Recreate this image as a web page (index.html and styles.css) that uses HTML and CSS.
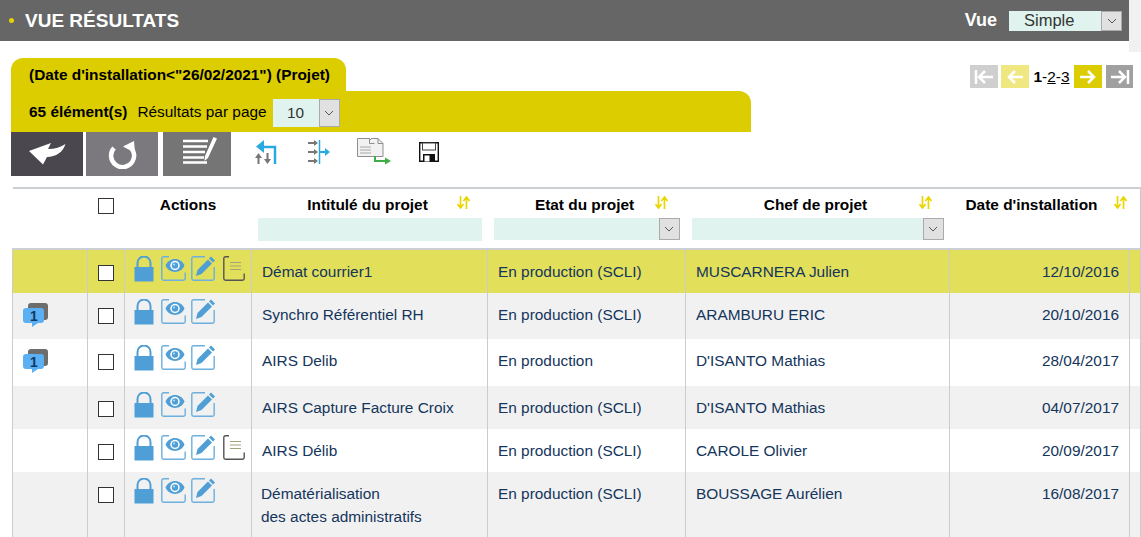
FILE: index.html
```html
<!DOCTYPE html>
<html lang="fr">
<head>
    <meta charset="UTF-8">
    <meta name="viewport" content="width=device-width, initial-scale=1.0">
    <title>Vue résultats</title>
    <link rel="stylesheet" href="styles.css">
</head>
<body>
    <svg class="icon-defs" aria-hidden="true">
        <defs>
            <symbol id="i-lock" viewBox="0 0 20 26">
                <path d="M3.500 12V7a6.500 6.500 0 0 1 13 0V12" fill="none" stroke="#4f9fd6" stroke-width="2"/>
                <rect x="0.500" y="11" width="19" height="14.500" fill="#4f9fd6"/>
            </symbol>
            <symbol id="i-eye" viewBox="0 0 25 25">
                <path d="M8 .8H2.500a1.700 1.700 0 0 0-1.700 1.700v20a1.700 1.700 0 0 0 1.700 1.700h20a1.700 1.700 0 0 0 1.700-1.700v-6" fill="none" stroke="#6db0dd" stroke-width="1.400"/>
                <path d="M4.500 9.500C8 .8 20 .8 23.500 9.500C20 18 8 18 4.500 9.500Z" fill="#4f9fd6"/>
                <circle cx="14" cy="9.500" r="4.700" fill="#fff"/>
                <circle cx="14" cy="9.500" r="3.200" fill="#4f9fd6"/>
                <circle cx="13" cy="8.500" r="1" fill="#bfe0f5"/>
            </symbol>
            <symbol id="i-edit" viewBox="0 0 25 25">
                <path d="M14 .8H2.500a1.700 1.700 0 0 0-1.700 1.700v20a1.700 1.700 0 0 0 1.700 1.700h19a1.700 1.700 0 0 0 1.700-1.700V11" fill="none" stroke="#6db0dd" stroke-width="1.400"/>
                <path d="M5 20l1.500-6L17 3.500l4 4L10.500 18Z" fill="#4f9fd6"/>
                <path d="M18 2.500L20 .6l4 4-2 2Z" fill="#4f9fd6"/>
            </symbol>
            <symbol id="i-note" viewBox="0 0 22 25">
                <path d="M6 .8H2.500a1.700 1.700 0 0 0-1.700 1.700v20a1.700 1.700 0 0 0 1.700 1.700h17a1.700 1.700 0 0 0 1.700-1.700v-5" fill="none" stroke="#555" stroke-width="1.400"/>
                <path d="M7 6.500h11M7 10h11M7 13.500h11" stroke="#a3a27c" stroke-width="1"/>
            </symbol>
            <symbol id="i-comment" viewBox="0 0 25 24">
                <rect x="5" y="0" width="20" height="17" rx="3" fill="#6d6d6d"/>
                <path d="M3 5h15a3 3 0 0 1 3 3v9a3 3 0 0 1-3 3h-3l-6 4v-4H3a3 3 0 0 1-3-3V8a3 3 0 0 1 3-3Z" fill="#5ab0f2"/>
            </symbol>
            <symbol id="i-sort" viewBox="0 0 13 13">
                <path d="M3.500 0v11M.5 8l3 4 3-4M9.500 13V2M6.500 5l3-4 3 4" fill="none" stroke="#ead600" stroke-width="1.700"/>
            </symbol>
        </defs>
    </svg>

    <header class="top-bar">
        <h1 class="top-title"><span class="top-bullet"></span>VUE RÉSULTATS</h1>
        <div class="view-picker">
            <span class="view-label">Vue</span>
            <div class="fake-select view-select">
                <span class="fake-value">Simple</span>
                <span class="fake-arrow"><svg width="10" height="6" viewBox="0 0 10 6"><path d="M1 1l4 4 4-4" fill="none" stroke="#555"/></svg></span>
            </div>
        </div>
    </header>
    <div class="scroll-stub"></div>

    <section class="summary">
        <div class="summary-left">
            <div class="query-tab">(Date d'installation&lt;"26/02/2021") (Projet)</div>
            <div class="count-bar">
                <strong>65 élément(s)</strong>
                <span class="per-page">Résultats par page</span>
                <div class="fake-select page-select">
                    <span class="fake-value">10</span>
                    <span class="fake-arrow"><svg width="10" height="6" viewBox="0 0 10 6"><path d="M1 1l4 4 4-4" fill="none" stroke="#555"/></svg></span>
                </div>
            </div>
        </div>
        <nav class="pager">
            <span class="page-btn btn-first"><svg width="20" height="16" viewBox="0 0 20 16"><path d="M2 1v14M19 8H6M11 2L5 8l6 6" fill="none" stroke="#fff" stroke-width="2.500"/></svg></span>
            <span class="page-btn btn-prev"><svg width="18" height="16" viewBox="0 0 18 16"><path d="M17 8H3M9 2L3 8l6 6" fill="none" stroke="#fff" stroke-width="2.500"/></svg></span>
            <span class="page-nums"><b>1</b>-<a href="#">2</a>-<a href="#">3</a></span>
            <span class="page-btn btn-next"><svg width="18" height="16" viewBox="0 0 18 16"><path d="M1 8h14M9 2l6 6-6 6" fill="none" stroke="#fff" stroke-width="2.500"/></svg></span>
            <span class="page-btn btn-last"><svg width="20" height="16" viewBox="0 0 20 16"><path d="M18 1v14M1 8h13M9 2l6 6-6 6" fill="none" stroke="#fff" stroke-width="2.500"/></svg></span>
        </nav>
    </section>

    <div class="toolbar">
        <button class="tool-btn tool-back"><svg width="37" height="22" viewBox="0 0 37 22"><path d="M0 8L22 0L19 6C26 6 32 4 36.500 1C34 9 27 14 18 14L14 21.500Z" fill="#fff"/></svg></button>
        <button class="tool-btn tool-reset"><svg width="30" height="30" viewBox="0 0 30 30"><path d="M7 9a11.500 11.500 0 1 0 14-2.500" fill="none" stroke="#fff" stroke-width="4.500"/><path d="M27 2L28 14L16 7.500Z" fill="#fff"/></svg></button>
        <button class="tool-btn tool-list"><svg width="34" height="27" viewBox="0 0 34 27"><path d="M0 4h25M0 9.500h24M0 15h22M0 20.500h21M0 25.500h24" stroke="#fff" stroke-width="2.500" fill="none"/><path d="M34 1.500L25 21l-3.500 3 .5-5L30.500 0Z" fill="#fff"/></svg></button>
        <div class="tool-icons">
            <span class="tool-icon icon-a"><svg width="22" height="24" viewBox="0 0 22 24"><path d="M20 24V7H6" fill="none" stroke="#29abe2" stroke-width="2.500"/><path d="M9 0L1 6.500L9 13Z" fill="#29abe2"/><path d="M3.500 24V15M12.500 13v9" fill="none" stroke="#777" stroke-width="2"/><path d="M0 18l3.500-5 3.500 5ZM9 19l3.500 5 3.500-5Z" fill="#777"/></svg></span>
            <span class="tool-icon icon-b"><svg width="22" height="24" viewBox="0 0 22 24"><path d="M0 3h7M0 12h7M0 21h7" fill="none" stroke="#777" stroke-width="2"/><path d="M6 0l4 3-4 3ZM6 9l4 3-4 3ZM6 18l4 3-4 3Z" fill="#777"/><path d="M11.500 0v24" stroke="#29abe2" stroke-width="1.500"/><path d="M11.500 12h6" stroke="#29abe2" stroke-width="2"/><path d="M17 8l5 4-5 4Z" fill="#29abe2"/></svg></span>
            <span class="tool-icon icon-c"><svg width="34" height="27" viewBox="0 0 34 27"><path d="M.5 .5h12l5 5v13H.5Z" fill="#f2f2f2" stroke="#8e8e8e"/><path d="M14 .5h7l5 5v13H14" fill="#f2f2f2" stroke="#8e8e8e"/><path d="M12.500 .5v5h5M21 .5v5h5" fill="none" stroke="#8e8e8e"/><path d="M3 9h11M3 12h11M3 15h11" stroke="#a8a8a8"/><path d="M18 18v5h12" fill="none" stroke="#3fae49" stroke-width="2"/><path d="M28 19.500l6 3.500-6 3.500Z" fill="#3fae49"/></svg></span>
            <span class="tool-icon icon-d"><svg width="20" height="20" viewBox="0 0 20 20"><path d="M.7 .7h18.600v18.600H.7Z" fill="#fff" stroke="#111" stroke-width="1.400"/><rect x="3.500" y="1" width="13" height="7" fill="#fff" stroke="#444"/><rect x="4" y="12" width="12" height="8" fill="#111"/><rect x="5.500" y="13.500" width="5" height="6" fill="#fff"/></svg></span>
        </div>
    </div>

    <table class="results">
        <colgroup>
            <col class="col-flag"><col class="col-check"><col class="col-actions"><col class="col-title"><col class="col-state"><col class="col-chief"><col class="col-date"><col class="col-end">
        </colgroup>
        <thead>
            <tr>
                <th></th>
                <th class="cell-check"><span class="check"></span></th>
                <th class="head-actions">Actions</th>
                <th>
                    <div class="head-line">Intitulé du projet<svg class="sort"><use href="#i-sort"/></svg></div>
                    <div class="filter-input"></div>
                </th>
                <th>
                    <div class="head-line">Etat du projet<svg class="sort"><use href="#i-sort"/></svg></div>
                    <div class="fake-select filter-select"><span class="fake-value"></span><span class="fake-arrow"><svg width="10" height="6" viewBox="0 0 10 6"><path d="M1 1l4 4 4-4" fill="none" stroke="#555"/></svg></span></div>
                </th>
                <th>
                    <div class="head-line">Chef de projet<svg class="sort"><use href="#i-sort"/></svg></div>
                    <div class="fake-select filter-select"><span class="fake-value"></span><span class="fake-arrow"><svg width="10" height="6" viewBox="0 0 10 6"><path d="M1 1l4 4 4-4" fill="none" stroke="#555"/></svg></span></div>
                </th>
                <th class="head-date">
                    <div class="head-line">Date d'installation<svg class="sort"><use href="#i-sort"/></svg></div>
                </th>
                <th class="cell-end"></th>
            </tr>
        </thead>
        <tbody>
            <tr class="row-a row-selected">
                <td></td>
                <td class="cell-check"><span class="check"></span></td>
                <td class="cell-actions"><svg class="a-lock"><use href="#i-lock"/></svg><svg class="a-icon"><use href="#i-eye"/></svg><svg class="a-icon"><use href="#i-edit"/></svg><svg class="a-note"><use href="#i-note"/></svg></td>
                <td>Démat courrier1</td>
                <td>En production (SCLI)</td>
                <td>MUSCARNERA Julien</td>
                <td class="cell-date">12/10/2016</td>
                <td class="cell-end"></td>
            </tr>
            <tr class="row-b row-grey">
                <td class="cell-flag"><span class="comment"><svg><use href="#i-comment"/></svg><b>1</b></span></td>
                <td class="cell-check"><span class="check"></span></td>
                <td class="cell-actions"><svg class="a-lock"><use href="#i-lock"/></svg><svg class="a-icon"><use href="#i-eye"/></svg><svg class="a-icon"><use href="#i-edit"/></svg></td>
                <td>Synchro Référentiel RH</td>
                <td>En production (SCLI)</td>
                <td>ARAMBURU ERIC</td>
                <td class="cell-date">20/10/2016</td>
                <td class="cell-end"></td>
            </tr>
            <tr class="row-c">
                <td class="cell-flag"><span class="comment"><svg><use href="#i-comment"/></svg><b>1</b></span></td>
                <td class="cell-check"><span class="check"></span></td>
                <td class="cell-actions"><svg class="a-lock"><use href="#i-lock"/></svg><svg class="a-icon"><use href="#i-eye"/></svg><svg class="a-icon"><use href="#i-edit"/></svg></td>
                <td>AIRS Delib</td>
                <td>En production</td>
                <td>D'ISANTO Mathias</td>
                <td class="cell-date">28/04/2017</td>
                <td class="cell-end"></td>
            </tr>
            <tr class="row-d row-grey">
                <td></td>
                <td class="cell-check"><span class="check"></span></td>
                <td class="cell-actions"><svg class="a-lock"><use href="#i-lock"/></svg><svg class="a-icon"><use href="#i-eye"/></svg><svg class="a-icon"><use href="#i-edit"/></svg></td>
                <td>AIRS Capture Facture Croix</td>
                <td>En production (SCLI)</td>
                <td>D'ISANTO Mathias</td>
                <td class="cell-date">04/07/2017</td>
                <td class="cell-end"></td>
            </tr>
            <tr class="row-e">
                <td></td>
                <td class="cell-check"><span class="check"></span></td>
                <td class="cell-actions"><svg class="a-lock"><use href="#i-lock"/></svg><svg class="a-icon"><use href="#i-eye"/></svg><svg class="a-icon"><use href="#i-edit"/></svg><svg class="a-note"><use href="#i-note"/></svg></td>
                <td>AIRS Délib</td>
                <td>En production (SCLI)</td>
                <td>CAROLE Olivier</td>
                <td class="cell-date">20/09/2017</td>
                <td class="cell-end"></td>
            </tr>
            <tr class="row-f row-grey">
                <td></td>
                <td class="cell-check"><span class="check"></span></td>
                <td class="cell-actions"><svg class="a-lock"><use href="#i-lock"/></svg><svg class="a-icon"><use href="#i-eye"/></svg><svg class="a-icon"><use href="#i-edit"/></svg></td>
                <td class="cell-two-lines">Dématérialisation<br>des actes administratifs</td>
                <td>En production (SCLI)</td>
                <td>BOUSSAGE Aurélien</td>
                <td class="cell-date">16/08/2017</td>
                <td class="cell-end"></td>
            </tr>
        </tbody>
    </table>
</body>
</html>
```

FILE: styles.css
```css
html, body {
    height: 537px;
    overflow: hidden;
}
body {
    margin: 0;
    font-family: "Liberation Sans", Arial, sans-serif;
    font-size: 15.4px;
    color: #000;
    background-color: #fff;
    position: relative;
}
.icon-defs {
    position: absolute;
    width: 0;
    height: 0;
}

/* top bar */
.top-bar {
    display: flex;
    justify-content: space-between;
    align-items: center;
    height: 41px;
    width: 1129px;
    background-color: #666;
    box-sizing: border-box;
    padding: 0 7px 0 9px;
}
.top-title {
    display: flex;
    align-items: center;
    margin: 0;
    font-size: 19px;
    font-weight: bold;
    color: #fff;
}
.top-bullet {
    width: 5px;
    height: 5px;
    margin-right: 11px;
    border-radius: 50%;
    background-color: #e6d200;
}
.view-picker {
    display: flex;
    align-items: center;
    gap: 12px;
}
.view-label {
    font-size: 18px;
    font-weight: bold;
    color: #fff;
}
.scroll-stub {
    position: absolute;
    top: 0;
    right: 0;
    width: 12px;
    height: 52px;
    background-color: #f1f1f1;
}

/* selects */
.fake-select {
    display: flex;
    background-color: #e0f3ee;
    box-sizing: border-box;
}
.fake-value {
    flex: 1;
    text-align: center;
    color: #333;
}
.fake-arrow {
    display: flex;
    align-items: center;
    justify-content: center;
    width: 21px;
    background-color: #e1e1e1;
    border: 1px solid #aaa;
    box-sizing: border-box;
}
.view-select {
    width: 113px;
    height: 20px;
    font-size: 16.5px;
    line-height: 18px;
}
.view-select .fake-value {
    text-align: left;
    padding-left: 15px;
}
.page-select {
    width: 67px;
    height: 28px;
    line-height: 28px;
    margin: 3px 0 0 6px;
}

/* query summary */
.summary {
    display: flex;
    justify-content: space-between;
    align-items: flex-start;
    padding: 17px 8px 0 11px;
}
.query-tab {
    width: 335px;
    height: 33px;
    box-sizing: border-box;
    padding: 8px 0 0 18px;
    background-color: #dccd00;
    border-radius: 12px 12px 0 0;
    font-weight: bold;
}
.count-bar {
    display: flex;
    align-items: center;
    width: 740px;
    height: 41px;
    box-sizing: border-box;
    padding: 0 0 0 18px;
    background-color: #dccd00;
    border-radius: 0 12px 0 0;
}
.per-page {
    margin-left: 10px;
}
.pager {
    display: flex;
    align-items: center;
    gap: 3px;
    margin-top: 7px;
}
.page-btn {
    display: flex;
    align-items: center;
    justify-content: center;
    width: 28px;
    height: 23px;
}
.btn-first { background-color: #cfcfcf; }
.btn-prev { background-color: #efe780; }
.btn-next { background-color: #dccd00; }
.btn-last { background-color: #a0a0a0; margin-left: 1px; width: 27px; }
.page-nums {
    width: 39px;
    text-align: center;
}
.page-nums a {
    color: #000;
}

/* toolbar */
.toolbar {
    display: flex;
    align-items: flex-start;
    height: 44px;
    padding-left: 11px;
}
.tool-btn {
    display: flex;
    align-items: center;
    justify-content: center;
    width: 72px;
    height: 44px;
    border: none;
    padding: 0;
}
.tool-back { background-color: #4a484e; }
.tool-reset { background-color: #7b797e; margin-left: 3px; }
.tool-list {
    background-color: #757575;
    margin-left: 5px;
    width: 68px;
    padding: 0 0 7px 6px;
}
.tool-icons {
    display: flex;
    align-items: center;
    height: 39px;
}
.tool-icon {
    display: flex;
}
.icon-a { margin-left: 24px; }
.icon-b { margin-left: 31px; }
.icon-c { margin-left: 27px; }
.icon-d { margin-left: 28px; }

/* results table */
.results {
    table-layout: fixed;
    width: 1128px;
    margin: 11px 0 0 12px;
    border-collapse: collapse;
    border-top: 2px solid #cdd0d3;
}
.col-flag { width: 75px; }
.col-check { width: 37px; }
.col-actions { width: 127px; }
.col-title { width: 236px; }
.col-state { width: 198px; }
.col-chief { width: 264px; }
.col-date { width: 180px; }
.col-end { width: 11px; }
.results th {
    height: 52px;
    padding: 0 6px 7px;
    vertical-align: top;
    font-weight: bold;
    border-bottom: 2px solid #cdd0d3;
}
.head-line {
    position: relative;
    height: 29px;
    line-height: 32px;
    padding-right: 4px;
    text-align: center;
}
.head-actions {
    line-height: 32px;
}
.head-date .head-line {
    text-align: left;
    padding-left: 10px;
}
.sort {
    position: absolute;
    top: 7px;
    right: 12px;
    width: 13px;
    height: 13px;
}
.head-date .sort {
    right: -3px;
}
.filter-input {
    height: 23px;
    background-color: #e0f3ee;
}
.filter-select {
    height: 22px;
}
.results td {
    padding: 13px 10px 0;
    color: #14355c;
    line-height: 18px;
    border-left: 1px solid #ccc;
    vertical-align: top;
}
.results th.cell-end, .results td.cell-end {
    padding: 0;
    border-right: 1px solid #ccc;
}
.row-a { height: 44px; }
.row-b { height: 46px; }
.row-c { height: 47px; }
.row-d { height: 43px; }
.row-e { height: 43px; }
.row-f { height: 72px; }
.row-selected td { background-color: #e2df5a; }
.row-grey td { background-color: #f1f1f1; }
.cell-date { text-align: right; }
.results .cell-two-lines {
    padding: 10px 10px 0 9px;
    line-height: 23px;
}
.results td.cell-check, .results tr td.cell-check {
    padding: 15px 0 0;
    text-align: center;
}
.results th.cell-check {
    height: 47px;
    padding: 9px 0 0;
    text-align: center;
}
.check {
    display: block;
    width: 16px;
    height: 16px;
    margin: 0 auto;
    box-sizing: border-box;
    border: 1px solid #333;
    background-color: #fff;
}
.results tr td.cell-actions {
    padding: 6px 0 0 9px;
    line-height: 0;
    white-space: nowrap;
}
.cell-actions svg {
    vertical-align: top;
}
.a-lock {
    width: 20px;
    height: 26px;
    margin-right: 7px;
}
.a-icon {
    width: 25px;
    height: 25px;
    margin-right: 5px;
}
.a-note {
    width: 22px;
    height: 25px;
    margin-left: 2px;
}
.results tr td.cell-flag {
    padding: 10px 0 0 10px;
}
.comment {
    position: relative;
    display: block;
    width: 25px;
    height: 24px;
}
.comment svg {
    width: 25px;
    height: 24px;
}
.comment b {
    position: absolute;
    left: 7px;
    top: 5px;
    font-size: 14px;
    line-height: 16px;
    color: #103a66;
}
```
